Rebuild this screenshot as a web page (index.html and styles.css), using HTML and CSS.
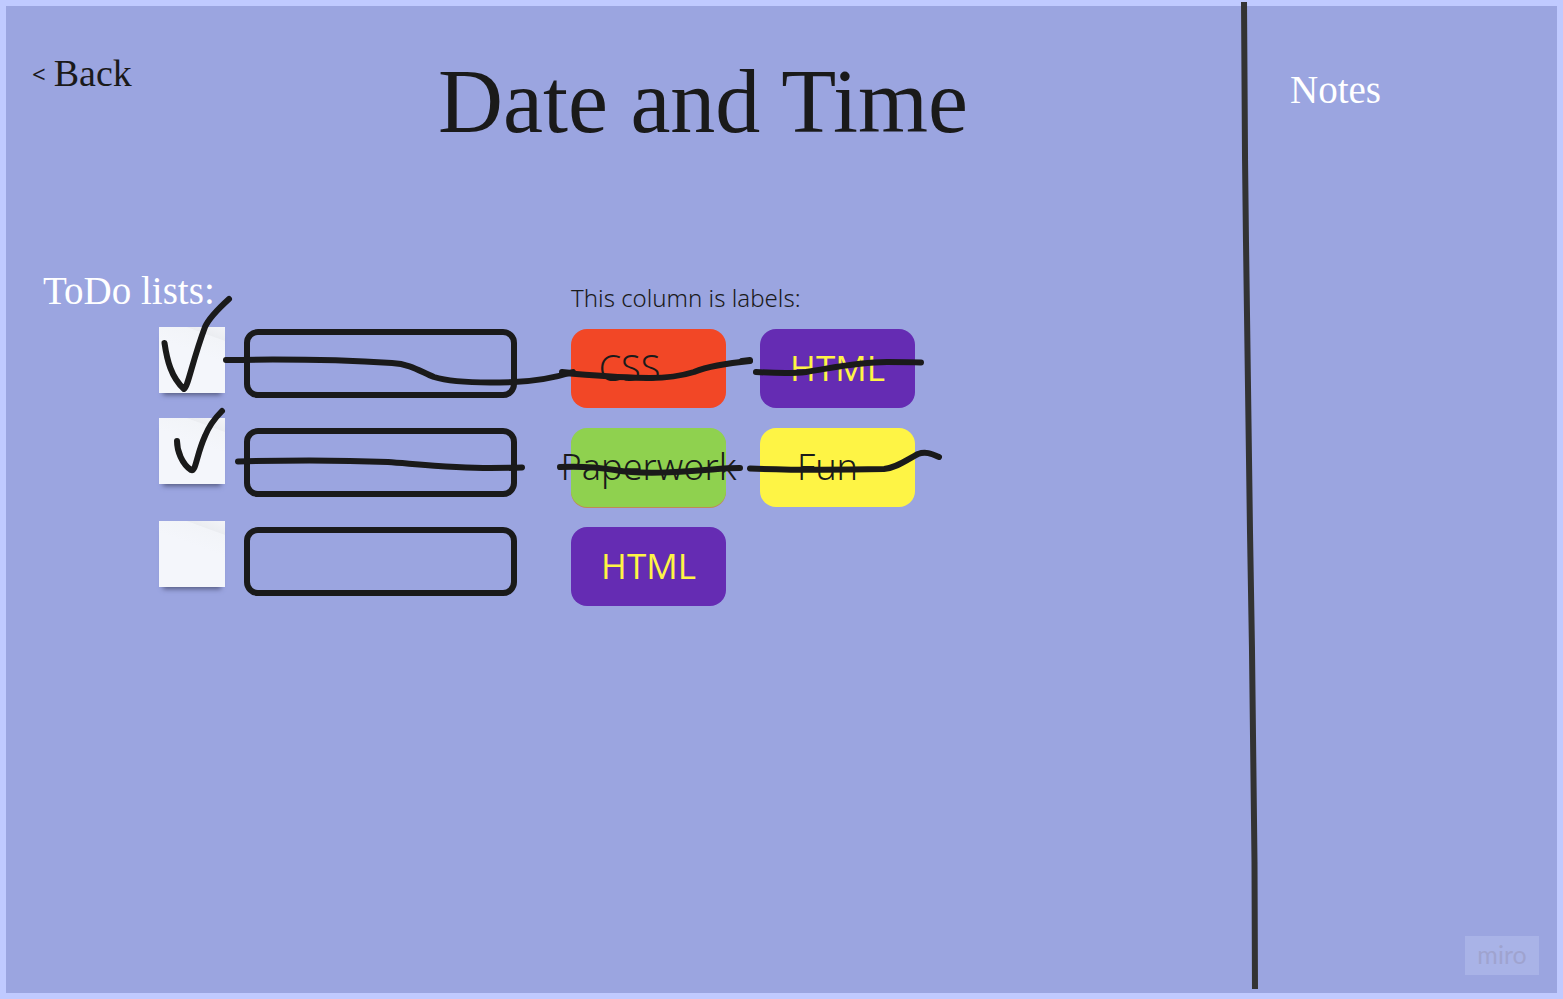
FILE: index.html
```html
<!DOCTYPE html>
<html lang="en">
<head>
<meta charset="utf-8">
<meta name="viewport" content="width=device-width, initial-scale=1">
<title>Date and Time</title>
<link rel="stylesheet" href="styles.css">
</head>
<body>
<div class="board">
  <main class="planner">
    <header class="topbar">
      <a class="back" href="#"><span class="back-arrow">&lt;</span>Back</a>
      <h1 class="title">Date and Time</h1>
    </header>
    <section class="todo">
      <div class="todo-head">
        <h2 class="heading">ToDo lists:</h2>
        <p class="caption">This column is labels:</p>
      </div>
      <div class="todo-body">
        <ul class="rows">
          <li class="row">
            <input class="note" type="checkbox" checked aria-label="First item done">
            <input class="field" type="text" aria-label="First item">
            <div class="tags">
              <span class="tag tag-css">CSS</span>
              <span class="tag tag-html">HTML</span>
            </div>
          </li>
          <li class="row">
            <input class="note note-high" type="checkbox" checked aria-label="Second item done">
            <input class="field" type="text" aria-label="Second item">
            <div class="tags">
              <span class="tag tag-paperwork">Paperwork</span>
              <span class="tag tag-fun">Fun</span>
            </div>
          </li>
          <li class="row">
            <input class="note note-raised" type="checkbox" aria-label="Third item done">
            <input class="field" type="text" aria-label="Third item">
            <div class="tags">
              <span class="tag tag-html">HTML</span>
            </div>
          </li>
        </ul>
        <svg class="ink" width="800" height="280" viewBox="159 329 800 280" aria-hidden="true">
          <path d="M164.500 343C167 360 171 377 184 389C188 387 192 362 205 327C209 318 218 309 229 299"/>
          <path d="M226 360C285 359 345 360 392 363C411 364 421 372 434 377C450 382 485 383 514 382C538 381 554 378 573 372"/>
          <path d="M563 373C588 375 620 378 650 378C668 378 681 376 694 372C704 368 718 364 750 361"/>
          <path d="M562 372L572 373M742 361L750 360"/>
          <path d="M756 372C773 373 790 374 806 372C832 368 857 362 887 362C898 362 908 362 921 362.500"/>
          <path d="M177 441C177 451 182 464 191 470C196 472 196 456 205 436C209 426 214 419 222 411"/>
          <path d="M238 461.500C288 460 342 460 388 462C416 464 455 468 490 468C502 468 510 468 522 467.500"/>
          <path d="M560 467C578 466 596 467 615 470C642 475 680 472 705 470C718 469 727 468 740 468"/>
          <path d="M750 468.500C790 470 840 470 884 469C897 468 908 459 918 454C926 451 932 454 939 457"/>
        </svg>
      </div>
    </section>
  </main>
  <svg class="divider" viewBox="0 0 18 987" preserveAspectRatio="none" aria-hidden="true">
    <path d="M4 0C4 70 5 160 6 240C7 330 8 430 10 530C12 640 14 770 14.500 860C15 900 15 940 15 987"/>
  </svg>
  <aside class="notes">
    <h2 class="heading">Notes</h2>
    <span class="badge">miro</span>
  </aside>
</div>
</body>
</html>
```

FILE: styles.css
```css
* { box-sizing: border-box; }

body {
  margin: 0;
  background: #9ba5e0;
  color: #1a1a1a;
  font-family: "Noto Sans", "Open Sans", sans-serif;
}

.board {
  position: relative;
  display: grid;
  grid-template-columns: minmax(0, 1fr) 314px;
  min-height: 100vh;
  border: 6px solid #c0caff;
}

.planner {
  display: flex;
  flex-direction: column;
  gap: 117px;
  padding-top: 46px;
}

.topbar {
  display: grid;
  grid-template-columns: 432px 1fr;
}

.back,
.title,
.heading {
  font-family: "Liberation Serif", serif;
  font-weight: 400;
  margin: 0;
}

.back {
  justify-self: start;
  display: flex;
  align-items: center;
  gap: 8px;
  height: 42px;
  padding-left: 26px;
  color: inherit;
  font-size: 38px;
  text-decoration: none;
}

.back-arrow {
  font-family: "Open Sans", sans-serif;
  font-size: 24px;
}

.title {
  font-size: 90px;
  line-height: 100px;
}

.heading {
  color: #fff;
  font-size: 39px;
  line-height: 44px;
}

.todo-head {
  display: grid;
  grid-template-columns: 528px 1fr;
  align-items: end;
  padding-left: 37px;
}

.caption {
  margin: 0;
  font-size: 24px;
  font-weight: 350;
  line-height: 30px;
}

.todo-body {
  position: relative;
  margin: 16px 0 0 153px;
}

.rows {
  display: grid;
  gap: 20px;
  margin: 0;
  padding: 0;
  list-style: none;
}

.row {
  display: flex;
  align-items: flex-start;
  height: 79px;
}

.note {
  appearance: none;
  flex: none;
  width: 66px;
  height: 66px;
  margin: -2px 19px 0 0;
  background: linear-gradient(20deg, #f4f6fb 60%, #f2f4f8 84%, #ebedf1 85%, #f3f4f8);
  box-shadow: 0 6px 5px -4px #545a80;
}

.note-high { margin-top: -10px; }

.note-raised { margin-top: -6px; }

.field {
  flex: none;
  width: 273px;
  height: 69px;
  margin: 0 54px 0 0;
  padding: 0 16px;
  border: 6px solid #1a1a1a;
  border-radius: 14px;
  background: transparent;
  font: inherit;
  font-size: 24px;
}

.tags {
  display: flex;
  gap: 34px;
}

.tag {
  display: flex;
  align-items: center;
  justify-content: center;
  width: 155px;
  height: 79px;
  padding-bottom: 2px;
  border-radius: 16px;
  font-size: 36px;
  font-weight: 350;
}

.tag-css {
  padding-right: 38px;
  background: #f24726;
}

.tag-html {
  background: #652cb3;
  color: #fef445;
  font-family: "Open Sans", sans-serif;
  font-size: 35px;
  font-weight: 400;
}

.tag-paperwork {
  background: #8fd14f;
  box-shadow: 0 1px 0 #c08a55;
}

.tag-fun {
  padding-right: 20px;
  background: #fef445;
}

.ink {
  position: absolute;
  top: 0;
  left: 0;
  overflow: visible;
  pointer-events: none;
  fill: none;
  stroke: #1a1a1a;
  stroke-width: 6;
  stroke-linecap: round;
  stroke-linejoin: round;
}

.divider {
  position: absolute;
  top: -4px;
  right: 299px;
  width: 18px;
  height: 100%;
  fill: none;
  stroke: #333;
  stroke-width: 6;
}

.notes {
  display: flex;
  flex-direction: column;
  justify-content: space-between;
  padding: 62px 18px 18px 47px;
}

.badge {
  align-self: flex-end;
  width: 74px;
  padding-bottom: 2px;
  background: #a9b3e7;
  color: #9fa3cf;
  font-family: Lato, sans-serif;
  font-size: 25px;
  line-height: 37px;
  text-align: center;
}
```
